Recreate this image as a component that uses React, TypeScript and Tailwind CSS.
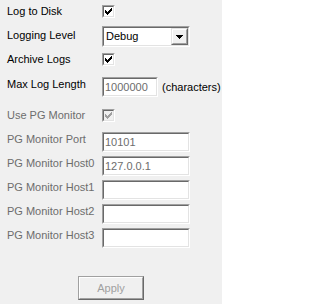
import React from "react";

const font = { fontFamily: '"Liberation Sans", Arial, sans-serif' };

function Sunken({ className, inner, children }: { className: string; inner?: string; children?: React.ReactNode }) {
  return (
    <div className={`border border-t-[#a0a0a0] border-l-[#a0a0a0] border-b-white border-r-white ${className}`}>
      <div className={`w-full h-full border border-t-[#696969] border-l-[#696969] border-b-[#e3e3e3] border-r-[#e3e3e3] ${inner ?? "bg-white"}`}>
        {children}
      </div>
    </div>
  );
}

function Check({ disabled }: { disabled?: boolean }) {
  return (
    <Sunken className="w-[13px] h-[13px]" inner={disabled ? "bg-[#f0f0f0]" : "bg-white"}>
      <svg width="7" height="7" viewBox="0 0 7 7" className="ml-[1px] mt-[1px] block" shapeRendering="crispEdges">
        <path
          d="M6 0h1v1h-1z M5 1h2v1h-2z M0 2h1v1h-1z M4 2h3v1h-3z M0 3h2v1h-2z M3 3h3v1h-3z M0 4h5v1h-5z M1 5h3v1h-3z M2 6h1v1h-1z"
          fill={disabled ? "#a0a0a0" : "#000"}
        />
      </svg>
    </Sunken>
  );
}

function Input({ value, w }: { value?: string; w: string }) {
  return (
    <Sunken className={`${w} h-[20px]`}>
      <div className="h-full flex items-center pl-[1px] text-[#6d6d6d] leading-[13px]">{value}</div>
    </Sunken>
  );
}

function Label({ text, gray, mt }: { text: string; gray?: boolean; mt: string }) {
  return (
    <div className={`w-[95px] leading-[13px] whitespace-nowrap ${mt} ${gray ? "text-[#6d6d6d]" : "text-black"}`}>{text}</div>
  );
}

export default function App() {
  return (
    <div className="w-[222px] h-[304px] bg-[#f0f0f0] pl-[7px] text-[11px] overflow-hidden" style={font}>
      <div className="h-[24px] flex items-start">
        <Label text="Log to Disk" mt="mt-[5px]" />
        <div className="mt-[5px]"><Check /></div>
      </div>
      <div className="h-[26px] flex items-start">
        <Label text="Logging Level" mt="mt-[5px]" />
        <div className="mt-[2px]">
          <Sunken className="w-[88px] h-[21px]">
            <div className="h-full flex items-center justify-between">
              <span className="pl-[2px] leading-[13px] text-black">Debug</span>
              <div className="w-[17px] h-[17px] border border-t-[#e3e3e3] border-l-[#e3e3e3] border-b-[#696969] border-r-[#696969] bg-[#f0f0f0]">
                <div className="w-full h-full border border-t-white border-l-white border-b-[#a0a0a0] border-r-[#a0a0a0] flex items-center justify-center">
                  <svg width="7" height="4" viewBox="0 0 7 4" shapeRendering="crispEdges" className="block">
                    <path d="M0 0h7v1h-7z M1 1h5v1h-5z M2 2h3v1h-3z M3 3h1v1h-1z" fill="#000" />
                  </svg>
                </div>
              </div>
            </div>
          </Sunken>
        </div>
      </div>
      <div className="h-[24px] flex items-start">
        <Label text="Archive Logs" mt="mt-[3px]" />
        <div className="mt-[3px]"><Check /></div>
      </div>
      <div className="h-[30px] flex items-start">
        <Label text="Max Log Length" mt="mt-[4px]" />
        <div className="mt-[3px]"><Input value="1000000" w="w-[56px]" /></div>
        <div className="ml-[4px] mt-[7px] leading-[13px] text-black whitespace-nowrap">(characters)</div>
      </div>
      <div className="h-[24px] flex items-start">
        <Label text="Use PG Monitor" gray mt="mt-[5px]" />
        <div className="mt-[5px]"><Check disabled /></div>
      </div>
      {[
        ["PG Monitor Port", "10101"],
        ["PG Monitor Host0", "127.0.0.1"],
        ["PG Monitor Host1", ""],
        ["PG Monitor Host2", ""],
        ["PG Monitor Host3", ""],
      ].map(([l, v]) => (
        <div key={l} className="h-[24px] flex items-start">
          <Label text={l} gray mt="mt-[5px]" />
          <div className="mt-[4px]"><Input value={v} w="w-[88px]" /></div>
        </div>
      ))}
      <div className="mt-[28px] ml-[71px] w-[66px] h-[24px] border border-t-[#a0a0a0] border-l-[#a0a0a0] border-b-[#696969] border-r-[#696969]">
        <div className="w-full h-full border border-t-white border-l-white border-b-[#a0a0a0] border-r-[#a0a0a0] flex items-center justify-center text-[#a0a0a0] leading-[13px]">
          Apply
        </div>
      </div>
    </div>
  );
}
